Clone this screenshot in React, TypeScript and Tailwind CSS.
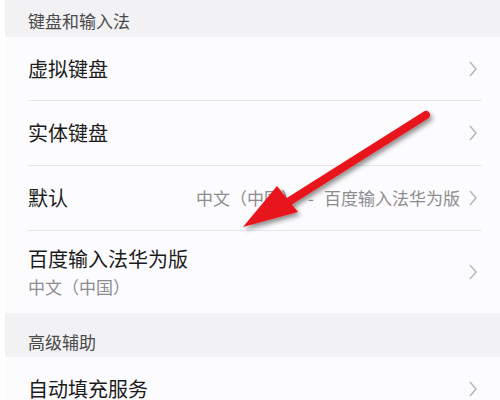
import { ReactNode } from "react";

const font = { fontFamily: '"Noto Sans CJK SC", "Noto Sans", sans-serif' };

function Chevron() {
  return (
    <svg width="10" height="18" viewBox="0 0 10 18" className="shrink-0">
      <path d="M2 2 L8 9 L2 16" fill="none" stroke="#b9b8bb" strokeWidth="1.6" />
    </svg>
  );
}

function SectionHeader({ children, className }: { children: ReactNode; className: string }) {
  return (
    <div className={`flex items-center bg-[#f2f1f3] pl-[23px] text-[17px] text-[#4a4a4a] ${className}`}>
      {children}
    </div>
  );
}

function Row({
  title,
  value,
  subtitle,
  height,
  divider = true
}: {
  title: string;
  value?: ReactNode;
  subtitle?: string;
  height: string;
  divider?: boolean;
}) {
  return (
    <div className={`flex items-center pl-[23px] pr-[18px] ${height}`}>
      <div className={`flex h-full flex-1 items-center pr-1 ${divider ? "border-b border-[#e6e5e8]" : ""}`}>
        <div className="flex flex-1 flex-col">
          <span className="text-[20px] leading-[30px] text-[#1b1b1b]">{title}</span>
          {subtitle && <span className="text-[17px] leading-[26px] text-[#8d8c8f]">{subtitle}</span>}
        </div>
        {value && <span className="mr-2 text-[17px] text-[#8d8c8f]">{value}</span>}
        <Chevron />
      </div>
    </div>
  );
}

export default function App() {
  return (
    <div className="relative h-[400px] w-[500px] overflow-hidden bg-white pl-[5px]" style={font}>
      <div className="h-full bg-[#fcfbfd]">
        <SectionHeader className="h-[37px] pt-[4px]">键盘和输入法</SectionHeader>
        <Row title="虚拟键盘" height="h-[64px]" />
        <Row title="实体键盘" height="h-[65px]" />
        <Row
          title="默认"
          value={
            <>
              中文（中国）<span className="mx-[10px]">-</span>百度输入法华为版
            </>
          }
          height="h-[65px]"
        />
        <Row title="百度输入法华为版" subtitle="中文（中国）" height="h-[82px]" divider={false} />
        <SectionHeader className="h-[44px] pt-[14px]">高级辅助</SectionHeader>
        <Row title="自动填充服务" height="h-[64px]" divider={false} />
      </div>

      <svg className="pointer-events-none absolute left-0 top-0" width="500" height="400">
        <defs>
          <filter id="shadow" x="-20%" y="-20%" width="140%" height="140%">
            <feDropShadow dx="2" dy="3" stdDeviation="2.5" floodColor="#000" floodOpacity="0.45" />
          </filter>
        </defs>
        <g filter="url(#shadow)">
          <line x1="426" y1="115" x2="285" y2="204" stroke="#e8141a" strokeWidth="8" strokeLinecap="round" />
          <polygon points="243,227 277,186 298,212" fill="#e8141a" />
        </g>
      </svg>
    </div>
  );
}
